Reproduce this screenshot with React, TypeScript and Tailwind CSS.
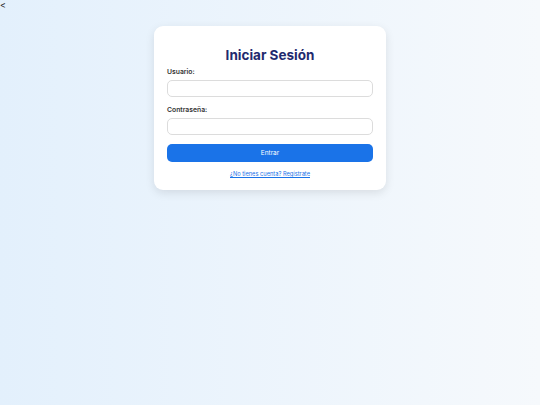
import React from "react";

export default function App() {
  return (
    <div
      className="relative min-h-[405px] w-full bg-gradient-to-r from-[#e3f0fc] to-[#f6f9fc]"
      style={{ fontFamily: "Inter, 'Noto Sans', sans-serif" }}
    >
      <div className="absolute left-0 top-0 text-[9px] leading-[10px] text-[#222]">&lt;</div>
      <div className="flex justify-center pt-[26px]">
        <div className="w-[232px] rounded-[9px] bg-white px-[13px] pb-[12px] pt-[19px] shadow-[0_3px_10px_rgba(0,0,0,0.10)]">
          <h1 className="text-center text-[13.5px] font-bold leading-[20px] text-[#1f2a6e]">Iniciar Sesión</h1>
          <div className="mt-[2px]">
            <label className="block text-[6.8px] font-semibold leading-[10px] text-[#333]">Usuario:</label>
            <input className="mt-[3px] block h-[17px] w-full rounded-[5px] border border-[#dcdcdc] bg-white" />
          </div>
          <div className="mt-[8px]">
            <label className="block text-[6.8px] font-semibold leading-[10px] text-[#333]">Contraseña:</label>
            <input type="password" className="mt-[3px] block h-[17px] w-full rounded-[5px] border border-[#dcdcdc] bg-white" />
          </div>
          <button className="mt-[9px] block h-[18px] w-full rounded-[5px] bg-[#1a73e8] text-[6.5px] leading-[18px] text-white">
            Entrar
          </button>
          <div className="mt-[8px] text-center text-[5.7px] leading-[8px]">
            <a href="#" className="text-[#1a73e8] underline">¿No tienes cuenta? Regístrate</a>
          </div>
        </div>
      </div>
    </div>
  );
}
